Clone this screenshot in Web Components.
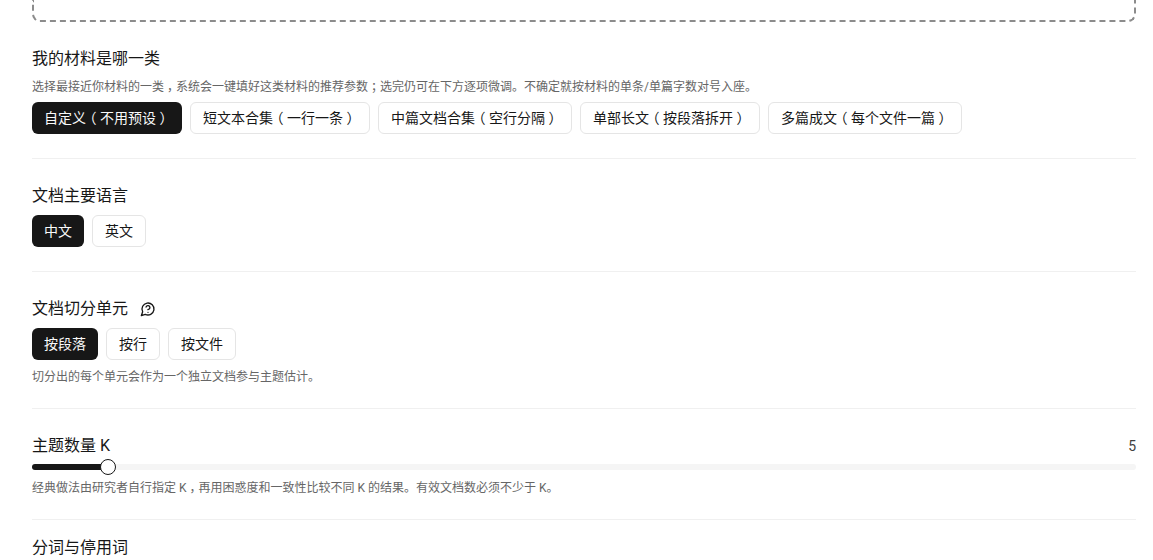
<!DOCTYPE html>
<html lang="zh-CN">
<head>
<meta charset="utf-8">
<title>文档设置</title>
<style>
  html, body { margin: 0; height: 100%; overflow: hidden; background: #fff; }
  body {
    font-family: Roboto, "Noto Sans CJK SC", sans-serif;
    color: #171717;
  }
  main { display: block; padding: 0 17px 0 32px; }
  /* the reference centres full-width punctuation in its cell */
  .pc { font-feature-settings: "halt"; margin: 0 .25em; }
</style>
<script>
  class DropZone extends HTMLElement {
    constructor() {
      super()
      this.attachShadow({ mode: 'open' }).innerHTML = `
        <style>
          :host {
            display: block;
            box-sizing: border-box;
            height: 22px;
            border: 2px dashed #8c8c8c;
            border-top: none;
            border-radius: 0 0 8px 8px;
          }
        </style>`
    }
  }

  class FormSection extends HTMLElement {
    constructor() {
      super()
      this.attachShadow({ mode: 'open' }).innerHTML = `
        <style>
          :host {
            display: flex;
            flex-direction: column;
            gap: 6px;
            padding: 24px 0;
            border-bottom: 1px solid #f0f0f0;
          }
          :host([last]) { padding: 16px 0 0; border-bottom: none; }
        </style>
        <slot></slot>`
    }
  }

  class SectionTitle extends HTMLElement {
    constructor() {
      super()
      this.attachShadow({ mode: 'open' }).innerHTML = `
        <style>
          :host {
            display: flex;
            align-items: center;
            justify-content: space-between;
            height: 26px;
            font-size: 16px;
            line-height: 24px;
            font-weight: 400;
            color: #171717;
          }
          .left { display: flex; align-items: center; gap: 12px; }
          ::slotted([slot=value]) { font-size: 14px; color: #404040; }
        </style>
        <div class="left"><span><slot></slot></span><slot name="icon"></slot></div>
        <slot name="value"></slot>`
    }
  }

  class HintText extends HTMLElement {
    constructor() {
      super()
      this.attachShadow({ mode: 'open' }).innerHTML = `
        <style>
          :host { display: block; font-size: 12px; line-height: 18px; color: #666; }
          :host([after]) { margin: 2px 0 -2px; }
        </style>
        <slot></slot>`
    }
  }

  class ChoiceGroup extends HTMLElement {
    constructor() {
      super()
      this.attachShadow({ mode: 'open' }).innerHTML = `
        <style>
          :host { display: flex; flex-wrap: wrap; gap: 8px; }
        </style>
        <slot></slot>`
    }
  }

  class ChoiceChip extends HTMLElement {
    constructor() {
      super()
      this.attachShadow({ mode: 'open' }).innerHTML = `
        <style>
          :host {
            display: inline-flex;
            align-items: center;
            box-sizing: border-box;
            height: 32px;
            padding: 0 12px 2px;
            border: 1px solid #e5e5e5;
            border-radius: 6px;
            background: #fff;
            color: #171717;
            font-size: 14px;
          }
          :host([selected]) {
            border: none;
            background: #171717;
            color: #fafafa;
          }
          span { display: block; }
        </style>
        <span><slot></slot></span>`
    }
  }

  class RangeSlider extends HTMLElement {
    constructor() {
      super()
      this.attachShadow({ mode: 'open' }).innerHTML = `
        <style>
          :host { display: flex; align-items: center; height: 8px; margin-top: -2px; }
          .track {
            position: relative;
            flex: 1;
            height: 6px;
            border-radius: 3px;
            background: #f5f5f5;
          }
          .fill {
            height: 100%;
            border-radius: 3px 0 0 3px;
            background: #171717;
          }
          .thumb {
            position: absolute;
            top: 50%;
            box-sizing: border-box;
            width: 16px;
            height: 16px;
            margin: -8px 0 0 -8px;
            border: 1px solid #171717;
            border-radius: 50%;
            background: #fff;
          }
        </style>
        <div class="track">
          <div class="fill"></div>
          <div class="thumb"></div>
        </div>`
    }

    connectedCallback() {
      let pos = this.getAttribute('pos')
      this.shadowRoot.querySelector('.fill').style.width = pos
      this.shadowRoot.querySelector('.thumb').style.left = pos
    }
  }

  customElements.define('drop-zone', DropZone)
  customElements.define('form-section', FormSection)
  customElements.define('section-title', SectionTitle)
  customElements.define('hint-text', HintText)
  customElements.define('choice-group', ChoiceGroup)
  customElements.define('choice-chip', ChoiceChip)
  customElements.define('range-slider', RangeSlider)
</script>
</head>
<body>
<main>
  <drop-zone></drop-zone>

  <form-section>
    <section-title>我的材料是哪一类</section-title>
    <hint-text>选择最接近你材料的一类<span class="pc">，</span>系统会一键填好这类材料的推荐参数<span class="pc">；</span>选完仍可在下方逐项微调。不确定就按材料的单条/单篇字数对号入座。</hint-text>
    <choice-group>
      <choice-chip selected>自定义<span class="pc">（</span>不用预设<span class="pc">）</span></choice-chip>
      <choice-chip>短文本合集<span class="pc">（</span>一行一条<span class="pc">）</span></choice-chip>
      <choice-chip>中篇文档合集<span class="pc">（</span>空行分隔<span class="pc">）</span></choice-chip>
      <choice-chip>单部长文<span class="pc">（</span>按段落拆开<span class="pc">）</span></choice-chip>
      <choice-chip>多篇成文<span class="pc">（</span>每个文件一篇<span class="pc">）</span></choice-chip>
    </choice-group>
  </form-section>

  <form-section>
    <section-title>文档主要语言</section-title>
    <choice-group>
      <choice-chip selected>中文</choice-chip>
      <choice-chip>英文</choice-chip>
    </choice-group>
  </form-section>

  <form-section>
    <section-title>文档切分单元
      <svg slot="icon" width="16" height="16" viewBox="0 0 24 24" fill="none" stroke="#171717" stroke-width="2" stroke-linecap="round" stroke-linejoin="round"><path d="M7.9 20A9 9 0 1 0 4 16.1L2 22Z"/><path d="M9.09 9a3 3 0 0 1 5.83 1c0 2-3 3-3 3"/><path d="M12 17h.01"/></svg>
    </section-title>
    <choice-group>
      <choice-chip selected>按段落</choice-chip>
      <choice-chip>按行</choice-chip>
      <choice-chip>按文件</choice-chip>
    </choice-group>
    <hint-text after>切分出的每个单元会作为一个独立文档参与主题估计。</hint-text>
  </form-section>

  <form-section>
    <section-title>主题数量 K<span slot="value">5</span></section-title>
    <range-slider pos="6.88%"></range-slider>
    <hint-text after>经典做法由研究者自行指定 K<span class="pc">，</span>再用困惑度和一致性比较不同 K 的结果。有效文档数必须不少于 K。</hint-text>
  </form-section>

  <form-section last>
    <section-title style="height:24px">分词与停用词</section-title>
  </form-section>
</main>
</body>
</html>
